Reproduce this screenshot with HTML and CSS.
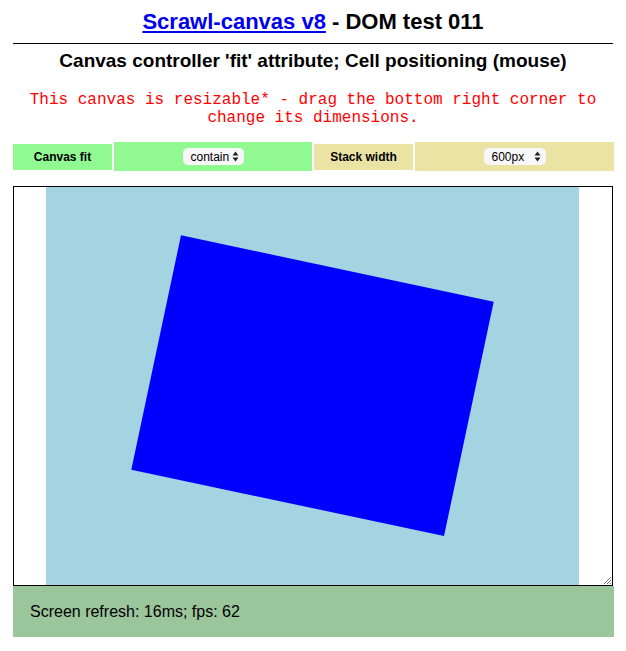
FILE: index.html
```html
<!DOCTYPE html>
<html>
<head>
<meta charset="utf-8">
<link rel="stylesheet" href="styles.css">
</head>
<body>
<main class="page">
  <h1 class="title"><a href="#" class="home">Scrawl-canvas v8</a> - DOM test 011</h1>
  <h2 class="subtitle">Canvas controller 'fit' attribute; Cell positioning (mouse)</h2>
  <p class="note">This canvas is resizable* - drag the bottom right corner to change its dimensions.</p>

  <div class="controls">
    <div class="label green">Canvas fit</div>
    <div class="cell green">
      <span class="select">contain<svg class="arrows" width="7" height="11" viewBox="0 0 7 11"><path d="M3.5 0.5 L6.5 4.5 L0.5 4.5 Z M3.5 10.5 L6.5 6.5 L0.5 6.5 Z" fill="#222"/></svg></span>
    </div>
    <div class="label khaki">Stack width</div>
    <div class="cell khaki">
      <span class="select wide">600px<svg class="arrows" width="7" height="11" viewBox="0 0 7 11"><path d="M3.5 0.5 L6.5 4.5 L0.5 4.5 Z M3.5 10.5 L6.5 6.5 L0.5 6.5 Z" fill="#222"/></svg></span>
    </div>
  </div>

  <div class="stack">
    <div class="canvas">
      <svg width="533" height="398" viewBox="0 0 533 398">
        <polygon points="135,48.3 447.7,114.7 398,349 85.3,282.7" fill="#0000ff"/>
      </svg>
    </div>
    <svg class="grip" width="10" height="10" viewBox="0 0 10 10"><path d="M9 2 L2 9 M9 5 L5 9 M9 8 L8 9" stroke="#777" stroke-width="1"/></svg>
  </div>

  <div class="report">Screen refresh: 16ms; fps: 62</div>
</main>
</body>
</html>
```

FILE: styles.css
```css
html, body {
  margin: 0;
  padding: 0;
  background: #ffffff;
}

body {
  font-family: "Liberation Sans", Arial, sans-serif;
  color: #000;
}

.page {
  width: 600px;
  margin: 0 auto;
  padding-top: 9px;
}

.title {
  margin: 0;
  padding-bottom: 8px;
  font-size: 22px;
  line-height: 26px;
  font-weight: bold;
  text-align: center;
  border-bottom: 1px solid #000;
}

.home {
  color: #0000ee;
  text-decoration: underline;
}

.subtitle {
  margin: 6px 0 0;
  font-size: 19px;
  line-height: 22px;
  font-weight: bold;
  text-align: center;
}

.note {
  margin: 19px 0 0;
  font-family: "Liberation Mono", "Courier New", monospace;
  font-size: 16px;
  line-height: 18px;
  color: #ff0000;
  text-align: center;
}

.controls {
  margin-top: 15px;
  display: grid;
  grid-template-columns: 99px 198px 99px 199px;
  column-gap: 2px;
  align-items: center;
}

.label {
  height: 26px;
  display: flex;
  align-items: center;
  justify-content: center;
  font-size: 12px;
  font-weight: bold;
}

.cell {
  height: 29px;
  display: flex;
  align-items: center;
  justify-content: center;
}

.green { background: #91f991; }
.khaki { background: #eae3a3; }

.select {
  display: inline-flex;
  align-items: center;
  justify-content: space-between;
  box-sizing: border-box;
  width: 61px;
  height: 17px;
  padding: 0 5px 0 8px;
  background: #f7f7f7;
  border-radius: 5px;
  font-size: 12px;
  color: #000;
}

.select.wide {
  width: 62px;
  padding-left: 8px;
}

.arrows {
  display: block;
}

.stack {
  position: relative;
  margin-top: 15px;
  box-sizing: border-box;
  width: 600px;
  height: 400px;
  border: 1px solid #000;
  padding-left: 32px;
  background: #fff;
}

.canvas {
  width: 533px;
  height: 398px;
  background: #a4d3e2;
}

.canvas svg {
  display: block;
}

.grip {
  position: absolute;
  right: 0;
  bottom: 0;
}

.report {
  height: 51px;
  width: 601px;
  box-sizing: border-box;
  padding-left: 17px;
  display: flex;
  align-items: center;
  background: #9bc59b;
  font-size: 16px;
}
```
